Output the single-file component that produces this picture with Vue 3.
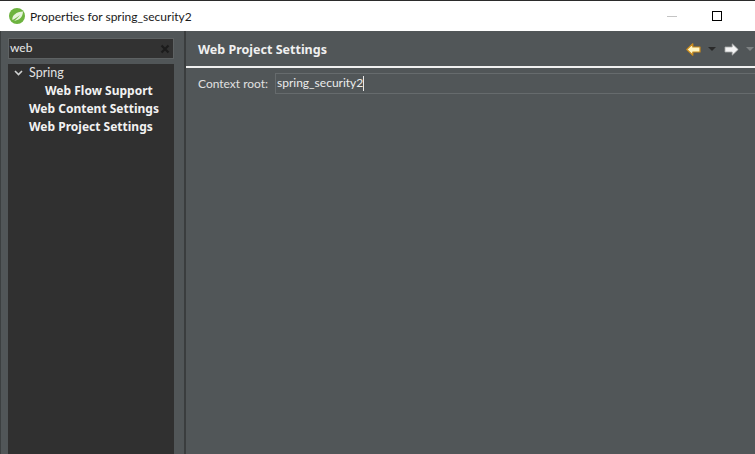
<script setup>
const rows = [
  { label: 'Spring', cls: 'plain', chevron: true },
  { label: 'Web Flow Support', cls: 'bold deep' },
  { label: 'Web Content Settings', cls: 'bold' },
  { label: 'Web Project Settings', cls: 'bold' },
]
</script>

<template>
  <div class="window">
    <header class="titlebar">
      <svg class="logo" viewBox="0 0 16 16" width="16" height="16">
        <circle cx="8" cy="8" r="8" fill="#6db33f" />
        <path d="M3.4 12C2.8 7.6 7.4 3.8 14 3.6 13.8 9.2 10 13 5.2 12.6 7.6 11 9.2 9.4 10.8 7 8.6 9 6.2 10.8 3.4 12Z" fill="#e6f3dc" />
      </svg>
      <span class="title">Properties for spring_security2</span>
      <span class="minimize"></span>
      <span class="maximize"></span>
    </header>
    <div class="body">
      <aside class="side">
        <div class="search">
          <span class="query">web</span>
          <svg class="clear" viewBox="0 0 10 10" width="10" height="10">
            <path d="M1.5 1.5 8.5 8.5M8.5 1.5 1.5 8.5" stroke="#1c1c1c" stroke-width="2.2" />
          </svg>
        </div>
        <div class="tree">
          <div v-for="row in rows" :key="row.label" class="row" :class="row.cls">
            <svg v-if="row.chevron" class="chevron" viewBox="0 0 9 6" width="9" height="6">
              <path d="M1 1 4.5 4.5 8 1" fill="none" stroke="#d0d2d2" stroke-width="1.6" />
            </svg>
            {{ row.label }}
          </div>
        </div>
      </aside>
      <main class="main">
        <div class="head">
          <h1>Web Project Settings</h1>
          <div class="nav">
            <svg viewBox="0 0 15 13" width="15" height="13">
              <path d="M.8 6.5 6.8.8V4H14V9H6.8V12.2Z" fill="#fff6c4" stroke="#c98a1b" stroke-width="1.2" stroke-linejoin="round" />
            </svg>
            <span class="tri dark"></span>
            <svg class="next" viewBox="0 0 15 13" width="15" height="13">
              <path d="M14.2 6.5 8.2.8V4H1V9H8.2V12.2Z" fill="#f4f4f4" stroke="#a6a8a8" stroke-width=".8" stroke-linejoin="round" />
            </svg>
            <span class="tri muted"></span>
          </div>
        </div>
        <div class="field">
          <label>Context root:</label>
          <div class="input"><span class="value">spring_security2</span><i class="caret"></i></div>
        </div>
      </main>
    </div>
  </div>
</template>

<style scoped>
.window {
  width: 755px;
  height: 454px;
  box-sizing: border-box;
  border-top: 1px solid #2b2b2b;
  display: flex;
  flex-direction: column;
  overflow: hidden;
  font-family: Lato, "Noto Sans", sans-serif;
  font-size: 12px;
  background: #515658;
}
.titlebar {
  height: 30px;
  flex: none;
  background: #fff;
  display: flex;
  align-items: center;
  padding-left: 9px;
  color: #1a1a1a;
}
.logo { flex: none; }
.title { margin-left: 5px; }
.minimize {
  width: 10px;
  height: 1px;
  background: #c4c4c4;
  margin-left: auto;
}
.maximize {
  width: 8px;
  height: 8px;
  border: 1px solid #000;
  margin-left: 35px;
  margin-right: 33px;
}
.body {
  flex: 1;
  display: flex;
  min-height: 0;
  border-left: 1px solid #3b3f40;
}
.side {
  width: 183px;
  flex: none;
  box-sizing: border-box;
  padding: 7px 10px 0 7px;
  display: flex;
  flex-direction: column;
  gap: 5px;
}
.search {
  height: 21px;
  box-sizing: border-box;
  background: #323232;
  border: 1px solid #5e6263;
  display: flex;
  align-items: center;
  justify-content: space-between;
  padding: 0 3px 0 1px;
  color: #e8e8e8;
}
.query { margin-bottom: 2px; }
.tree {
  flex: 1;
  background: #303030;
  color: #e2e2e2;
}
.row {
  height: 18px;
  line-height: 18px;
  padding-left: 21px;
  position: relative;
  white-space: nowrap;
  font-size: 12.5px;
}
.row.bold {
  font-family: "Noto Sans", sans-serif;
  font-size: 12px;
  font-weight: 700;
  color: #f2f2f2;
}
.row.deep { padding-left: 37px; }
.chevron {
  position: absolute;
  left: 6px;
  top: 6px;
}
.main {
  flex: 1;
  min-width: 0;
  color: #e0e0e0;
  border-left: 2px solid #3a3d3e;
}
.head {
  height: 37px;
  box-sizing: border-box;
  border-bottom: 2px solid #f0f0f0;
  display: flex;
  align-items: center;
  justify-content: space-between;
  padding: 0 0 0 12px;
}
h1 {
  margin: 2px 0 0;
  font-family: "Noto Sans", sans-serif;
  font-size: 12.5px;
  font-weight: 700;
  color: #f0f0f0;
}
.nav {
  display: flex;
  align-items: center;
  margin: 1px 1px 0 0;
}
.tri {
  width: 0;
  height: 0;
  border: 4px solid transparent;
  border-top: 4px solid #2a2a2a;
  border-bottom: 0;
  margin-left: 7px;
}
.tri.muted { border-top-color: #7e8283; margin-left: 7px; }
.next { margin-left: 8px; }
.field {
  display: flex;
  align-items: center;
  margin-top: 5px;
  padding-left: 12px;
}
label { width: 77px; flex: none; margin-bottom: 1px; }
.input {
  flex: 1;
  height: 21px;
  box-sizing: border-box;
  border: 1px solid #666b6d;
  border-right: 0;
  padding-left: 1px;
  display: flex;
  align-items: center;
  color: #ececec;
}
.value { margin-bottom: 3px; }
.caret {
  width: 1px;
  height: 15px;
  background: #e8e8e8;
}
</style>
